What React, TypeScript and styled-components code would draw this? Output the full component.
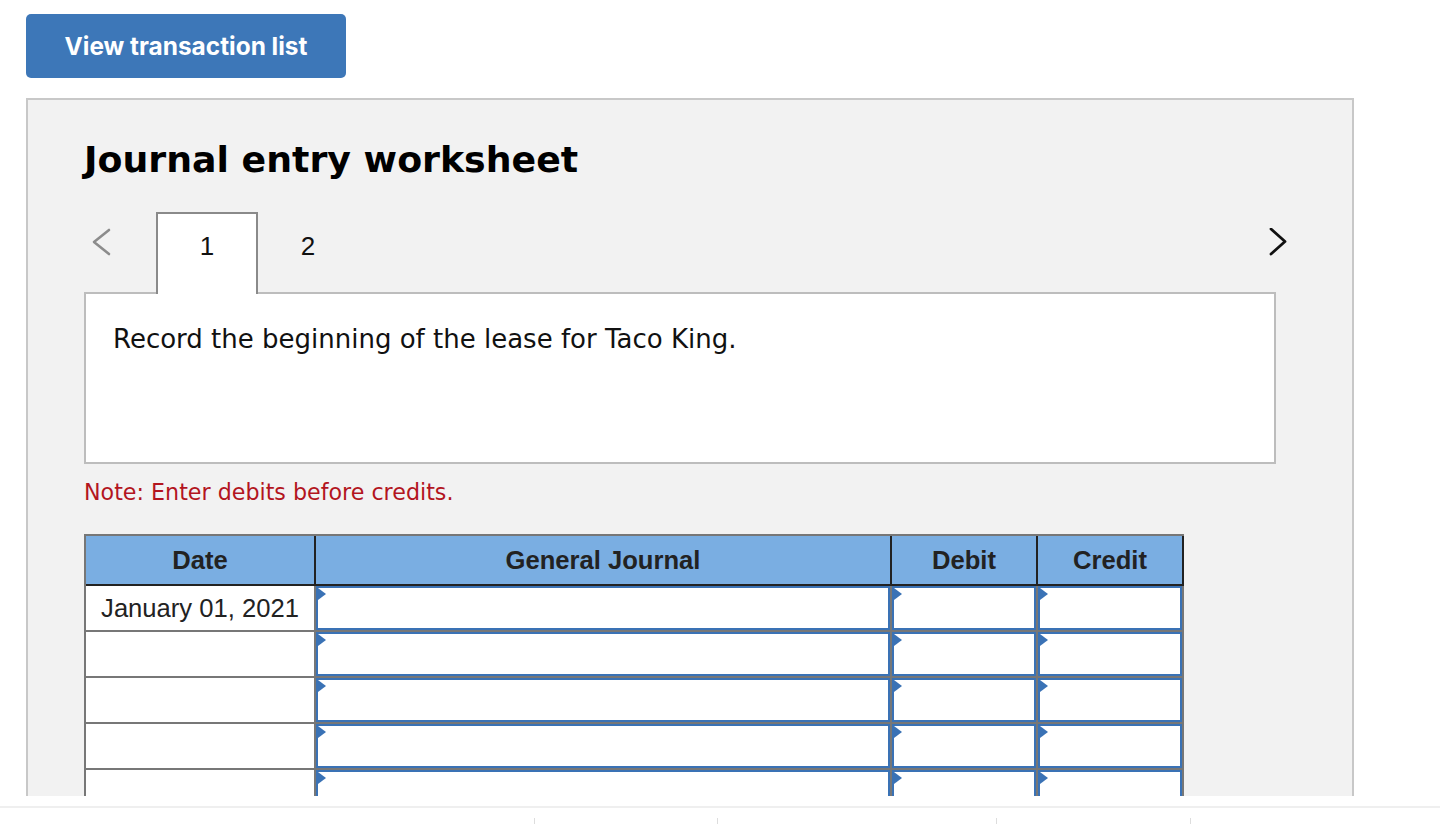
import React from "react";
import styled, { createGlobalStyle } from "styled-components";

const Global = createGlobalStyle`
  html, body { margin: 0; padding: 0; background: #ffffff; }
  body { font-family: "Liberation Sans", Arial, sans-serif; overflow: hidden; }
  * { box-sizing: border-box; }
`;

const Page = styled.div`
  width: 1440px;
  height: 824px;
  display: flex;
  flex-direction: column;
`;

const Viewport = styled.div`
  height: 796px;
  overflow: hidden;
  padding: 14px 0 0 26px;
  display: flex;
  flex-direction: column;
  align-items: flex-start;
`;

const PrimaryButton = styled.button`
  width: 320px;
  height: 64px;
  border: none;
  border-radius: 5px;
  background: #3d77b8;
  color: #ffffff;
  font-family: Inter, "Liberation Sans", sans-serif;
  font-weight: 700;
  font-size: 24.4px;
  padding: 0;
  cursor: pointer;
  flex-shrink: 0;
`;

const Panel = styled.section`
  margin-top: 20px;
  width: 1328px;
  flex-shrink: 0;
  min-height: 900px;
  border: 2px solid #c8c8c8;
  background: #f2f2f2;
  padding: 38px 0 0 56px;
  display: flex;
  flex-direction: column;
  align-items: flex-start;
`;

const Title = styled.h2`
  margin: 0;
  font-family: "DejaVu Sans", Verdana, sans-serif;
  font-weight: 700;
  font-size: 36.3px;
  line-height: 44px;
  color: #000;
`;

const TabRow = styled.div`
  margin-top: 30px;
  width: 1212px;
  height: 80px;
  display: flex;
  align-items: flex-start;
  position: relative;
  z-index: 1;
`;

const ChevronSlot = styled.div<{ $align: "start" | "end" }>`
  width: ${(p) => (p.$align === "start" ? "72px" : "auto")};
  margin-left: ${(p) => (p.$align === "end" ? "auto" : "0")};
  padding: ${(p) => (p.$align === "start" ? "16px 0 0 7px" : "16px 8px 0 0")};
  display: flex;
`;

const Tab = styled.div<{ $active?: boolean }>`
  width: ${(p) => (p.$active ? "102px" : "100px")};
  height: 82px;
  background: ${(p) => (p.$active ? "#ffffff" : "transparent")};
  border: 2px solid ${(p) => (p.$active ? "#8a8a8a" : "transparent")};
  border-bottom: none;
  display: flex;
  justify-content: center;
  padding-top: 17px;
  font-family: "Liberation Sans", Arial, sans-serif;
  font-size: 26px;
  line-height: 30px;
  color: #111;
`;

const PromptBox = styled.div`
  width: 1192px;
  height: 172px;
  background: #ffffff;
  border: 2px solid #bdbdbd;
  padding: 30px 0 0 27px;
  font-family: "DejaVu Sans", Verdana, sans-serif;
  font-size: 26px;
  line-height: 30px;
  color: #111;
`;

const Note = styled.p`
  margin: 14px 0 0 0;
  font-family: "DejaVu Sans", Verdana, sans-serif;
  font-size: 22.2px;
  line-height: 28px;
  color: #b3151e;
`;

const Journal = styled.table`
  margin-top: 28px;
  border-collapse: separate;
  border-spacing: 0;
  border-top: 2px solid #777777;
  border-left: 2px solid #777777;
  table-layout: fixed;
  width: 1100px;
`;

const HeadCell = styled.th<{ $w: number }>`
  width: ${(p) => p.$w}px;
  height: 50px;
  padding: 0;
  background: #7aaee2;
  border-right: 2px solid #222222;
  border-bottom: 2px solid #222222;
  font-family: "Liberation Sans", Arial, sans-serif;
  font-weight: 700;
  font-size: 25.6px;
  color: #222;
  text-align: center;
  vertical-align: middle;
`;

const DateCell = styled.td`
  height: 46px;
  padding: 0;
  background: #ffffff;
  border-right: 2px solid #777777;
  border-bottom: 2px solid #777777;
  font-family: "Liberation Sans", Arial, sans-serif;
  font-size: 25.6px;
  color: #222;
  text-align: center;
  vertical-align: middle;
  white-space: nowrap;
`;

const InputCell = styled.td`
  height: 46px;
  padding: 0;
  background: #ffffff;
  border-right: 2px solid #777777;
  border-bottom: 2px solid #777777;
  vertical-align: top;
`;

const EntryField = styled.div`
  position: relative;
  height: 44px;
  border: 2px solid #3a72b5;
  background: #ffffff;

  &::before {
    content: "";
    position: absolute;
    top: 0;
    left: 0;
    width: 0;
    height: 0;
    border-top: 6px solid transparent;
    border-bottom: 6px solid transparent;
    border-left: 8px solid #3a72b5;
  }
`;

const Footer = styled.footer`
  margin-top: 10px;
  border-top: 2px solid #efefef;
  padding-top: 10px;
  flex: 1;
  display: flex;
`;

const FooterItem = styled.div<{ $w: number; $line?: boolean }>`
  width: ${(p) => p.$w}px;
  border-left: ${(p) => (p.$line ? "1px solid #dddddd" : "none")};
`;

const Chevron = ({ dir }: { dir: "left" | "right" }) =>
  dir === "left" ? (
    <svg width="20" height="30" viewBox="0 0 20 30" aria-hidden>
      <polyline
        points="18,2 3,14 18,26"
        fill="none"
        stroke="#8c8c8c"
        strokeWidth="2.6"
        strokeLinecap="round"
        strokeLinejoin="round"
      />
    </svg>
  ) : (
    <svg width="20" height="30" viewBox="0 0 20 30" aria-hidden>
      <polyline
        points="3,1 17,13.5 3,26"
        fill="none"
        stroke="#111111"
        strokeWidth="2.8"
        strokeLinecap="round"
        strokeLinejoin="round"
      />
    </svg>
  );

const rows = ["January 01, 2021", "", "", "", "", ""];

export default function App() {
  return (
    <Page>
      <Global />
      <Viewport>
        <PrimaryButton>View transaction list</PrimaryButton>
        <Panel>
          <Title>Journal entry worksheet</Title>
          <TabRow>
            <ChevronSlot $align="start">
              <Chevron dir="left" />
            </ChevronSlot>
            <Tab $active>1</Tab>
            <Tab>2</Tab>
            <ChevronSlot $align="end">
              <Chevron dir="right" />
            </ChevronSlot>
          </TabRow>
          <PromptBox>Record the beginning of the lease for Taco King.</PromptBox>
          <Note>Note: Enter debits before credits.</Note>
          <Journal>
            <thead>
              <tr>
                <HeadCell $w={230}>Date</HeadCell>
                <HeadCell $w={576}>General Journal</HeadCell>
                <HeadCell $w={146}>Debit</HeadCell>
                <HeadCell $w={146}>Credit</HeadCell>
              </tr>
            </thead>
            <tbody>
              {rows.map((d, i) => (
                <tr key={i}>
                  <DateCell>{d}</DateCell>
                  <InputCell>
                    <EntryField />
                  </InputCell>
                  <InputCell>
                    <EntryField />
                  </InputCell>
                  <InputCell>
                    <EntryField />
                  </InputCell>
                </tr>
              ))}
            </tbody>
          </Journal>
        </Panel>
      </Viewport>
      <Footer>
        <FooterItem $w={534} />
        <FooterItem $w={183} $line />
        <FooterItem $w={279} $line />
        <FooterItem $w={194} $line />
        <FooterItem $w={250} $line />
      </Footer>
    </Page>
  );
}
